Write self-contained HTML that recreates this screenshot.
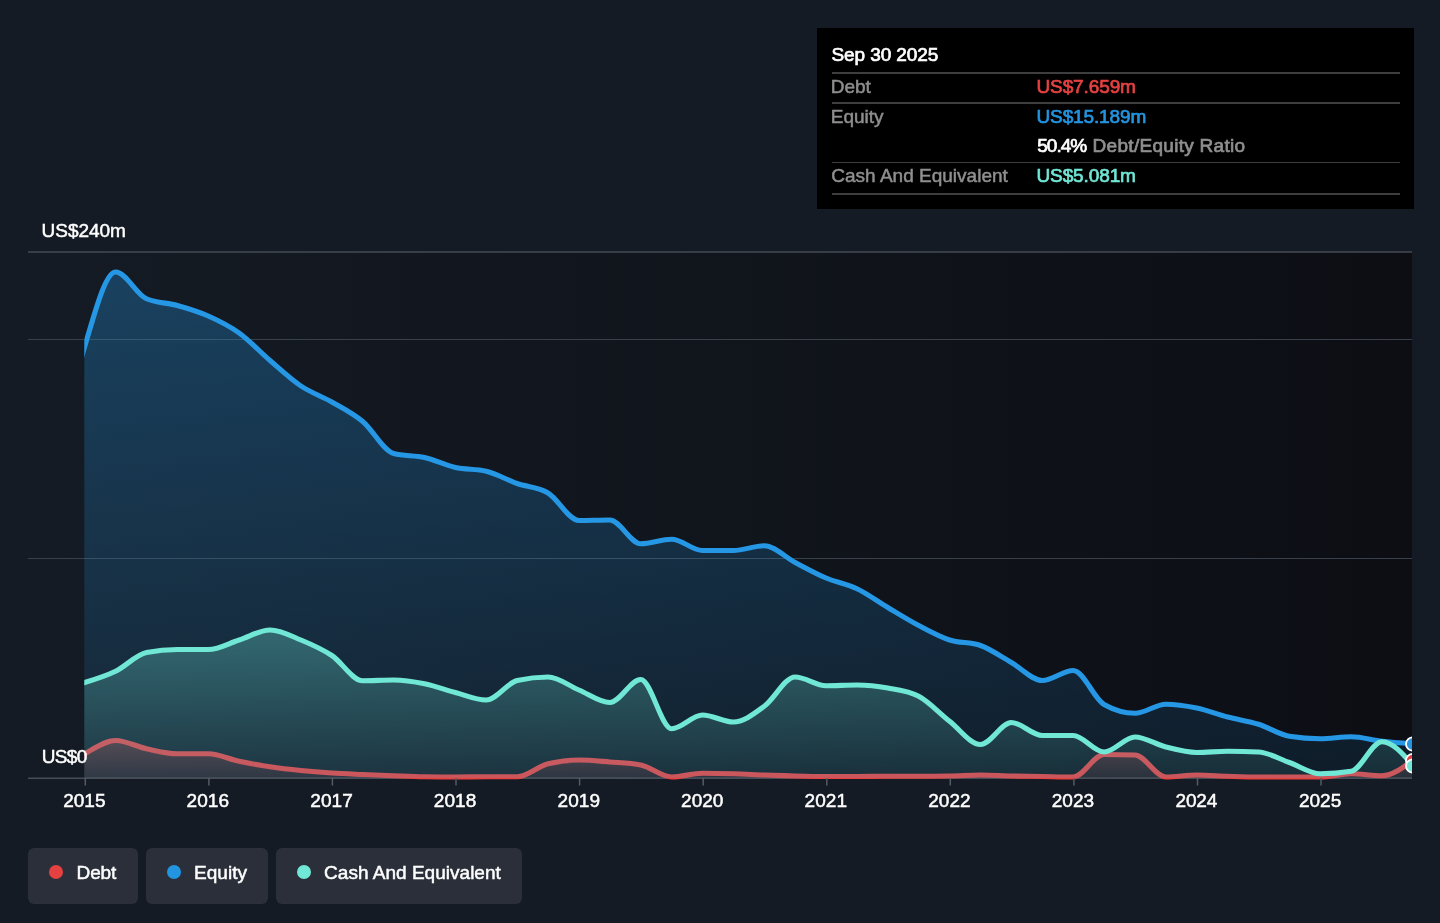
<!DOCTYPE html>
<html lang="en">
<head>
<meta charset="utf-8">
<title>Debt to Equity History</title>
<style>
html,body{margin:0;padding:0;}
body{width:1440px;height:923px;background:#151b24;overflow:hidden;position:relative;font-family:"Liberation Sans",sans-serif;color:#fff;}
#chart{position:absolute;left:0;top:0;width:1440px;height:923px;}
#txt{position:absolute;left:0;top:0;width:1440px;height:923px;will-change:transform;}
.t{position:absolute;white-space:nowrap;line-height:1;-webkit-text-stroke:0.5px currentColor;}
.t.b{-webkit-text-stroke:0.7px currentColor;}
#tip{position:absolute;left:817px;top:28px;width:596.5px;height:181px;background:#000;}
#tip .sep{position:absolute;left:14.5px;width:568px;height:1.5px;background:#3e3e3e;}
.leg{position:absolute;top:848px;height:55.5px;background:#2a2f3a;border-radius:6px;}
.leg .dot{position:absolute;left:20.7px;top:16.6px;width:14.8px;height:14.8px;border-radius:50%;}
</style>
</head>
<body>
<svg id="chart" width="1440" height="923" viewBox="0 0 1440 923">
  <defs>
    <linearGradient id="bgG" x1="0" y1="0" x2="1" y2="0">
      <stop offset="0" stop-color="#151b24"/>
      <stop offset="1" stop-color="#0c0e14"/>
    </linearGradient>
    <linearGradient id="eqG" x1="0" y1="0" x2="0" y2="1">
      <stop offset="0" stop-color="#2394df" stop-opacity="0.32"/>
      <stop offset="1" stop-color="#2394df" stop-opacity="0.10"/>
    </linearGradient>
    <linearGradient id="cashG" x1="0" y1="0" x2="0" y2="1">
      <stop offset="0" stop-color="#71e7d6" stop-opacity="0.32"/>
      <stop offset="1" stop-color="#71e7d6" stop-opacity="0.08"/>
    </linearGradient>
    <linearGradient id="debtG" x1="0" y1="0" x2="0" y2="1">
      <stop offset="0" stop-color="#e64141" stop-opacity="0.30"/>
      <stop offset="1" stop-color="#e64141" stop-opacity="0.10"/>
    </linearGradient>
    <clipPath id="plotClip"><rect x="84.3" y="240" width="1327.7" height="543"/></clipPath>
  </defs>
  <rect x="28" y="252" width="1384" height="526" fill="url(#bgG)"/>
  <line x1="28" x2="1412" y1="252" y2="252" stroke="#454b54" stroke-width="1.4"/>
  <g stroke="#3a4049" stroke-width="1.2">
    <line x1="28" x2="1412" y1="339.5" y2="339.5"/>
    <line x1="28" x2="1412" y1="558.5" y2="558.5"/>
  </g>
  <line x1="28" x2="1412" y1="778.2" y2="778.2" stroke="#474d56" stroke-width="1.6"/>
  <g clip-path="url(#plotClip)">
    <path d="M53.81,775.00C64.11,767.25,74.40,759.50,84.70,753.75C95.00,748.00,105.29,740.50,115.59,740.50C125.89,740.50,136.18,746.54,146.48,748.75C156.78,750.96,167.07,753.75,177.37,753.75C187.67,753.75,197.96,753.75,208.26,753.75C218.56,753.75,228.85,759.08,239.15,761.25C249.45,763.42,259.74,765.21,270.04,766.75C280.34,768.29,290.63,769.46,300.93,770.50C311.23,771.54,321.52,772.33,331.82,773.00C342.12,773.67,352.41,774.04,362.71,774.50C373.01,774.96,383.30,775.38,393.60,775.75C403.90,776.12,414.19,776.58,424.49,776.75C434.79,776.92,445.08,777.00,455.38,777.00C465.68,777.00,475.97,776.75,486.27,776.75C496.57,776.75,506.86,776.75,517.16,776.75C527.46,776.75,537.75,766.25,548.05,763.75C558.35,761.25,568.64,760.00,578.94,760.00C589.24,760.00,599.53,761.17,609.83,762.00C620.13,762.83,630.42,763.00,640.72,765.00C651.02,767.00,661.31,777.00,671.61,777.00C681.91,777.00,692.20,773.25,702.50,773.25C712.80,773.25,723.09,773.46,733.39,773.75C743.69,774.04,753.98,774.62,764.28,775.00C774.58,775.38,784.87,775.75,795.17,776.00C805.47,776.25,815.76,776.50,826.06,776.50C836.36,776.50,846.65,776.50,856.95,776.50C867.25,776.50,877.54,776.25,887.84,776.25C898.14,776.25,908.43,776.25,918.73,776.25C929.03,776.25,939.32,776.17,949.62,776.00C959.92,775.83,970.21,775.00,980.51,775.00C990.81,775.00,1001.10,775.75,1011.40,776.00C1021.70,776.25,1031.99,776.33,1042.29,776.50C1052.59,776.67,1062.88,777.00,1073.18,777.00C1083.48,777.00,1093.77,754.50,1104.07,754.50C1114.37,754.50,1124.66,754.67,1134.96,755.00C1145.26,755.33,1155.55,777.00,1165.85,777.00C1176.15,777.00,1186.44,775.00,1196.74,775.00C1207.04,775.00,1217.33,775.92,1227.63,776.25C1237.93,776.58,1248.22,777.00,1258.52,777.00C1268.82,777.00,1279.11,777.00,1289.41,777.00C1299.71,777.00,1310.00,777.00,1320.30,777.00C1330.60,777.00,1340.89,773.75,1351.19,773.75C1361.49,773.75,1371.78,775.75,1382.08,775.75C1392.38,775.75,1402.67,767.88,1412.97,760.00L1412.97,778L53.81,778Z" fill="url(#debtG)"/>
    <path d="M53.81,775.00C64.11,767.25,74.40,759.50,84.70,753.75C95.00,748.00,105.29,740.50,115.59,740.50C125.89,740.50,136.18,746.54,146.48,748.75C156.78,750.96,167.07,753.75,177.37,753.75C187.67,753.75,197.96,753.75,208.26,753.75C218.56,753.75,228.85,759.08,239.15,761.25C249.45,763.42,259.74,765.21,270.04,766.75C280.34,768.29,290.63,769.46,300.93,770.50C311.23,771.54,321.52,772.33,331.82,773.00C342.12,773.67,352.41,774.04,362.71,774.50C373.01,774.96,383.30,775.38,393.60,775.75C403.90,776.12,414.19,776.58,424.49,776.75C434.79,776.92,445.08,777.00,455.38,777.00C465.68,777.00,475.97,776.75,486.27,776.75C496.57,776.75,506.86,776.75,517.16,776.75C527.46,776.75,537.75,766.25,548.05,763.75C558.35,761.25,568.64,760.00,578.94,760.00C589.24,760.00,599.53,761.17,609.83,762.00C620.13,762.83,630.42,763.00,640.72,765.00C651.02,767.00,661.31,777.00,671.61,777.00C681.91,777.00,692.20,773.25,702.50,773.25C712.80,773.25,723.09,773.46,733.39,773.75C743.69,774.04,753.98,774.62,764.28,775.00C774.58,775.38,784.87,775.75,795.17,776.00C805.47,776.25,815.76,776.50,826.06,776.50C836.36,776.50,846.65,776.50,856.95,776.50C867.25,776.50,877.54,776.25,887.84,776.25C898.14,776.25,908.43,776.25,918.73,776.25C929.03,776.25,939.32,776.17,949.62,776.00C959.92,775.83,970.21,775.00,980.51,775.00C990.81,775.00,1001.10,775.75,1011.40,776.00C1021.70,776.25,1031.99,776.33,1042.29,776.50C1052.59,776.67,1062.88,777.00,1073.18,777.00C1083.48,777.00,1093.77,754.50,1104.07,754.50C1114.37,754.50,1124.66,754.67,1134.96,755.00C1145.26,755.33,1155.55,777.00,1165.85,777.00C1176.15,777.00,1186.44,775.00,1196.74,775.00C1207.04,775.00,1217.33,775.92,1227.63,776.25C1237.93,776.58,1248.22,777.00,1258.52,777.00C1268.82,777.00,1279.11,777.00,1289.41,777.00C1299.71,777.00,1310.00,777.00,1320.30,777.00C1330.60,777.00,1340.89,773.75,1351.19,773.75C1361.49,773.75,1371.78,775.75,1382.08,775.75C1392.38,775.75,1402.67,767.88,1412.97,760.00" fill="none" stroke="#e64141" stroke-width="5.1" stroke-linejoin="round"/>
    <path d="M53.81,476.00C64.11,428.25,74.40,380.50,84.70,346.50C95.00,312.50,105.29,272.00,115.59,272.00C125.89,272.00,136.18,294.25,146.48,298.75C156.78,303.25,167.07,302.62,177.37,305.50C187.67,308.38,197.96,311.42,208.26,316.00C218.56,320.58,228.85,325.58,239.15,333.00C249.45,340.42,259.74,351.67,270.04,360.50C280.34,369.33,290.63,379.08,300.93,386.00C311.23,392.92,321.52,396.08,331.82,402.00C342.12,407.92,352.41,412.92,362.71,421.50C373.01,430.08,383.30,450.83,393.60,453.50C403.90,456.17,414.19,455.17,424.49,457.50C434.79,459.83,445.08,465.21,455.38,467.50C465.68,469.79,475.97,468.75,486.27,471.25C496.57,473.75,506.86,479.88,517.16,483.50C527.46,487.12,537.75,486.83,548.05,493.00C558.35,499.17,568.64,520.50,578.94,520.50C589.24,520.50,599.53,520.00,609.83,520.00C620.13,520.00,630.42,543.75,640.72,543.75C651.02,543.75,661.31,539.25,671.61,539.25C681.91,539.25,692.20,550.50,702.50,550.50C712.80,550.50,723.09,550.50,733.39,550.50C743.69,550.50,753.98,545.75,764.28,545.75C774.58,545.75,784.87,557.12,795.17,562.50C805.47,567.88,815.76,573.62,826.06,578.00C836.36,582.38,846.65,583.83,856.95,588.75C867.25,593.67,877.54,601.38,887.84,607.50C898.14,613.62,908.43,620.08,918.73,625.50C929.03,630.92,939.32,636.67,949.62,640.00C959.92,643.33,970.21,641.83,980.51,645.50C990.81,649.17,1001.10,656.67,1011.40,662.50C1021.70,668.33,1031.99,680.50,1042.29,680.50C1052.59,680.50,1062.88,670.50,1073.18,670.50C1083.48,670.50,1093.77,698.67,1104.07,704.50C1114.37,710.33,1124.66,713.25,1134.96,713.25C1145.26,713.25,1155.55,704.20,1165.85,704.20C1176.15,704.20,1186.44,705.87,1196.74,708.00C1207.04,710.13,1217.33,714.29,1227.63,717.00C1237.93,719.71,1248.22,721.04,1258.52,724.25C1268.82,727.46,1279.11,734.58,1289.41,736.25C1299.71,737.92,1310.00,738.75,1320.30,738.75C1330.60,738.75,1340.89,736.75,1351.19,736.75C1361.49,736.75,1371.78,740.08,1382.08,741.25C1392.38,742.42,1402.67,743.08,1412.97,743.75L1412.97,778L53.81,778Z" fill="url(#eqG)"/>
    <path d="M53.81,476.00C64.11,428.25,74.40,380.50,84.70,346.50C95.00,312.50,105.29,272.00,115.59,272.00C125.89,272.00,136.18,294.25,146.48,298.75C156.78,303.25,167.07,302.62,177.37,305.50C187.67,308.38,197.96,311.42,208.26,316.00C218.56,320.58,228.85,325.58,239.15,333.00C249.45,340.42,259.74,351.67,270.04,360.50C280.34,369.33,290.63,379.08,300.93,386.00C311.23,392.92,321.52,396.08,331.82,402.00C342.12,407.92,352.41,412.92,362.71,421.50C373.01,430.08,383.30,450.83,393.60,453.50C403.90,456.17,414.19,455.17,424.49,457.50C434.79,459.83,445.08,465.21,455.38,467.50C465.68,469.79,475.97,468.75,486.27,471.25C496.57,473.75,506.86,479.88,517.16,483.50C527.46,487.12,537.75,486.83,548.05,493.00C558.35,499.17,568.64,520.50,578.94,520.50C589.24,520.50,599.53,520.00,609.83,520.00C620.13,520.00,630.42,543.75,640.72,543.75C651.02,543.75,661.31,539.25,671.61,539.25C681.91,539.25,692.20,550.50,702.50,550.50C712.80,550.50,723.09,550.50,733.39,550.50C743.69,550.50,753.98,545.75,764.28,545.75C774.58,545.75,784.87,557.12,795.17,562.50C805.47,567.88,815.76,573.62,826.06,578.00C836.36,582.38,846.65,583.83,856.95,588.75C867.25,593.67,877.54,601.38,887.84,607.50C898.14,613.62,908.43,620.08,918.73,625.50C929.03,630.92,939.32,636.67,949.62,640.00C959.92,643.33,970.21,641.83,980.51,645.50C990.81,649.17,1001.10,656.67,1011.40,662.50C1021.70,668.33,1031.99,680.50,1042.29,680.50C1052.59,680.50,1062.88,670.50,1073.18,670.50C1083.48,670.50,1093.77,698.67,1104.07,704.50C1114.37,710.33,1124.66,713.25,1134.96,713.25C1145.26,713.25,1155.55,704.20,1165.85,704.20C1176.15,704.20,1186.44,705.87,1196.74,708.00C1207.04,710.13,1217.33,714.29,1227.63,717.00C1237.93,719.71,1248.22,721.04,1258.52,724.25C1268.82,727.46,1279.11,734.58,1289.41,736.25C1299.71,737.92,1310.00,738.75,1320.30,738.75C1330.60,738.75,1340.89,736.75,1351.19,736.75C1361.49,736.75,1371.78,740.08,1382.08,741.25C1392.38,742.42,1402.67,743.08,1412.97,743.75" fill="none" stroke="#2597e4" stroke-width="5.1" stroke-linejoin="round"/>
    <path d="M53.81,690.00C64.11,687.81,74.40,685.62,84.70,682.50C95.00,679.38,105.29,676.25,115.59,671.25C125.89,666.25,136.18,654.50,146.48,652.50C156.78,650.50,167.07,649.50,177.37,649.50C187.67,649.50,197.96,649.50,208.26,649.50C218.56,649.50,228.85,643.25,239.15,640.00C249.45,636.75,259.74,630.00,270.04,630.00C280.34,630.00,290.63,635.75,300.93,640.00C311.23,644.25,321.52,648.71,331.82,655.50C342.12,662.29,352.41,680.75,362.71,680.75C373.01,680.75,383.30,680.00,393.60,680.00C403.90,680.00,414.19,681.67,424.49,683.75C434.79,685.83,445.08,689.79,455.38,692.50C465.68,695.21,475.97,700.00,486.27,700.00C496.57,700.00,506.86,682.83,517.16,680.50C527.46,678.17,537.75,677.00,548.05,677.00C558.35,677.00,568.64,685.75,578.94,690.00C589.24,694.25,599.53,702.50,609.83,702.50C620.13,702.50,630.42,679.50,640.72,679.50C651.02,679.50,661.31,728.75,671.61,728.75C681.91,728.75,692.20,715.00,702.50,715.00C712.80,715.00,723.09,722.00,733.39,722.00C743.69,722.00,753.98,713.75,764.28,706.25C774.58,698.75,784.87,677.00,795.17,677.00C805.47,677.00,815.76,685.75,826.06,685.75C836.36,685.75,846.65,685.00,856.95,685.00C867.25,685.00,877.54,686.12,887.84,688.00C898.14,689.88,908.43,690.75,918.73,696.25C929.03,701.75,939.32,713.21,949.62,721.25C959.92,729.29,970.21,744.50,980.51,744.50C990.81,744.50,1001.10,722.50,1011.40,722.50C1021.70,722.50,1031.99,735.50,1042.29,735.50C1052.59,735.50,1062.88,735.50,1073.18,735.50C1083.48,735.50,1093.77,752.00,1104.07,752.00C1114.37,752.00,1124.66,737.00,1134.96,737.00C1145.26,737.00,1155.55,744.42,1165.85,747.00C1176.15,749.58,1186.44,752.50,1196.74,752.50C1207.04,752.50,1217.33,751.25,1227.63,751.25C1237.93,751.25,1248.22,751.50,1258.52,752.00C1268.82,752.50,1279.11,758.88,1289.41,762.50C1299.71,766.12,1310.00,773.75,1320.30,773.75C1330.60,773.75,1340.89,772.92,1351.19,771.25C1361.49,769.58,1371.78,741.75,1382.08,741.75C1392.38,741.75,1402.67,753.62,1412.97,765.50L1412.97,778L53.81,778Z" fill="url(#cashG)"/>
    <path d="M53.81,690.00C64.11,687.81,74.40,685.62,84.70,682.50C95.00,679.38,105.29,676.25,115.59,671.25C125.89,666.25,136.18,654.50,146.48,652.50C156.78,650.50,167.07,649.50,177.37,649.50C187.67,649.50,197.96,649.50,208.26,649.50C218.56,649.50,228.85,643.25,239.15,640.00C249.45,636.75,259.74,630.00,270.04,630.00C280.34,630.00,290.63,635.75,300.93,640.00C311.23,644.25,321.52,648.71,331.82,655.50C342.12,662.29,352.41,680.75,362.71,680.75C373.01,680.75,383.30,680.00,393.60,680.00C403.90,680.00,414.19,681.67,424.49,683.75C434.79,685.83,445.08,689.79,455.38,692.50C465.68,695.21,475.97,700.00,486.27,700.00C496.57,700.00,506.86,682.83,517.16,680.50C527.46,678.17,537.75,677.00,548.05,677.00C558.35,677.00,568.64,685.75,578.94,690.00C589.24,694.25,599.53,702.50,609.83,702.50C620.13,702.50,630.42,679.50,640.72,679.50C651.02,679.50,661.31,728.75,671.61,728.75C681.91,728.75,692.20,715.00,702.50,715.00C712.80,715.00,723.09,722.00,733.39,722.00C743.69,722.00,753.98,713.75,764.28,706.25C774.58,698.75,784.87,677.00,795.17,677.00C805.47,677.00,815.76,685.75,826.06,685.75C836.36,685.75,846.65,685.00,856.95,685.00C867.25,685.00,877.54,686.12,887.84,688.00C898.14,689.88,908.43,690.75,918.73,696.25C929.03,701.75,939.32,713.21,949.62,721.25C959.92,729.29,970.21,744.50,980.51,744.50C990.81,744.50,1001.10,722.50,1011.40,722.50C1021.70,722.50,1031.99,735.50,1042.29,735.50C1052.59,735.50,1062.88,735.50,1073.18,735.50C1083.48,735.50,1093.77,752.00,1104.07,752.00C1114.37,752.00,1124.66,737.00,1134.96,737.00C1145.26,737.00,1155.55,744.42,1165.85,747.00C1176.15,749.58,1186.44,752.50,1196.74,752.50C1207.04,752.50,1217.33,751.25,1227.63,751.25C1237.93,751.25,1248.22,751.50,1258.52,752.00C1268.82,752.50,1279.11,758.88,1289.41,762.50C1299.71,766.12,1310.00,773.75,1320.30,773.75C1330.60,773.75,1340.89,772.92,1351.19,771.25C1361.49,769.58,1371.78,741.75,1382.08,741.75C1392.38,741.75,1402.67,753.62,1412.97,765.50" fill="none" stroke="#71e7d6" stroke-width="5.1" stroke-linejoin="round"/>
    <circle cx="1412.6" cy="744" r="6.6" fill="#2394df" stroke="#fff" stroke-width="1.8"/>
    <circle cx="1412.6" cy="760.5" r="6.6" fill="#e64141" stroke="#fff" stroke-width="1.8"/>
    <circle cx="1412.6" cy="766" r="6.6" fill="#71e7d6" stroke="#fff" stroke-width="1.8"/>
  </g>
  <g stroke="#555b63" stroke-width="1.5">
    <line x1="85.3" x2="85.3" y1="778" y2="785.5"/>
    <line x1="208.9" x2="208.9" y1="778" y2="785.5"/>
    <line x1="332.4" x2="332.4" y1="778" y2="785.5"/>
    <line x1="456.0" x2="456.0" y1="778" y2="785.5"/>
    <line x1="579.6" x2="579.6" y1="778" y2="785.5"/>
    <line x1="703.2" x2="703.2" y1="778" y2="785.5"/>
    <line x1="826.8" x2="826.8" y1="778" y2="785.5"/>
    <line x1="950.3" x2="950.3" y1="778" y2="785.5"/>
    <line x1="1073.9" x2="1073.9" y1="778" y2="785.5"/>
    <line x1="1197.5" x2="1197.5" y1="778" y2="785.5"/>
    <line x1="1321.0" x2="1321.0" y1="778" y2="785.5"/>
  </g>
</svg>

<div id="tip">
  <div class="sep" style="top:44.3px;"></div>
  <div class="sep" style="top:74.1px;"></div>
  <div class="sep" style="top:133.7px;"></div>
  <div class="sep" style="top:165.3px;"></div>
</div>
<div class="leg" style="left:28px;width:110px;"><span class="dot" style="background:#e64141"></span></div>
<div class="leg" style="left:146px;width:122px;"><span class="dot" style="background:#2394df"></span></div>
<div class="leg" style="left:276px;width:246px;"><span class="dot" style="background:#71e7d6"></span></div>
<div id="txt">
<div class="t" id="y240" style="left:41.60px;top:221.00px;font-size:19.00px;letter-spacing:-0.023px;color:#fff;">US$240m</div>
<div class="t" id="y0" style="left:41.65px;top:747.00px;font-size:19.00px;letter-spacing:-0.600px;color:#fff;">US$0</div>
<div class="t b" id="tdate" style="left:831.50px;top:45.00px;font-size:19.00px;letter-spacing:-0.104px;color:#fff;">Sep 30 2025</div>
<div class="t" id="kdebt" style="left:830.75px;top:77.00px;font-size:19.00px;letter-spacing:-0.075px;color:#8f8f8f;">Debt</div>
<div class="t" id="keq" style="left:830.75px;top:107.00px;font-size:19.00px;letter-spacing:-0.018px;color:#8f8f8f;">Equity</div>
<div class="t" id="kcash" style="left:831.25px;top:166.00px;font-size:19.00px;letter-spacing:0.012px;color:#8f8f8f;">Cash And Equivalent</div>
<div class="t b" id="vdebt" style="left:1036.50px;top:77.00px;font-size:19.00px;letter-spacing:-0.113px;color:#e64141;">US$7.659m</div>
<div class="t b" id="veq" style="left:1036.50px;top:107.00px;font-size:19.00px;letter-spacing:-0.125px;color:#2394df;">US$15.189m</div>
<div class="t b" id="vratio" style="left:1037.25px;top:136.00px;font-size:19.00px;letter-spacing:-0.990px;color:#fff;">50.4%</div>
<div class="t b" id="vratio2" style="left:1092.60px;top:136.00px;font-size:19.00px;letter-spacing:0.292px;color:#8f8f8f;">Debt/Equity Ratio</div>
<div class="t b" id="vcash" style="left:1036.50px;top:166.00px;font-size:19.00px;letter-spacing:-0.113px;color:#71e7d6;">US$5.081m</div>
<div class="t" id="ldebt" style="left:76.50px;top:863.00px;font-size:19.00px;letter-spacing:-0.090px;color:#fff;">Debt</div>
<div class="t" id="leq" style="left:193.90px;top:863.00px;font-size:19.00px;letter-spacing:0.081px;color:#fff;">Equity</div>
<div class="t" id="lcash" style="left:324.10px;top:863.00px;font-size:19.00px;letter-spacing:0.018px;color:#fff;">Cash And Equivalent</div>
<div class="t" id="x2015" style="left:63.15px;top:791.00px;font-size:19.00px;letter-spacing:0.045px;color:#fff;">2015</div>
<div class="t" id="x2016" style="left:186.62px;top:791.00px;font-size:19.00px;letter-spacing:0.045px;color:#fff;">2016</div>
<div class="t" id="x2017" style="left:310.35px;top:791.00px;font-size:19.00px;letter-spacing:0.045px;color:#fff;">2017</div>
<div class="t" id="x2018" style="left:433.82px;top:791.00px;font-size:19.00px;letter-spacing:0.045px;color:#fff;">2018</div>
<div class="t" id="x2019" style="left:557.55px;top:791.00px;font-size:19.00px;letter-spacing:0.045px;color:#fff;">2019</div>
<div class="t" id="x2020" style="left:681.02px;top:791.00px;font-size:19.00px;letter-spacing:0.045px;color:#fff;">2020</div>
<div class="t" id="x2021" style="left:804.50px;top:791.00px;font-size:19.00px;letter-spacing:0.120px;color:#fff;">2021</div>
<div class="t" id="x2022" style="left:928.22px;top:791.00px;font-size:19.00px;letter-spacing:0.045px;color:#fff;">2022</div>
<div class="t" id="x2023" style="left:1051.70px;top:791.00px;font-size:19.00px;letter-spacing:0.045px;color:#fff;">2023</div>
<div class="t" id="x2024" style="left:1175.43px;top:791.00px;font-size:19.00px;letter-spacing:-0.105px;color:#fff;">2024</div>
<div class="t" id="x2025" style="left:1298.90px;top:791.00px;font-size:19.00px;letter-spacing:0.045px;color:#fff;">2025</div>
</div>
</body>
</html>
